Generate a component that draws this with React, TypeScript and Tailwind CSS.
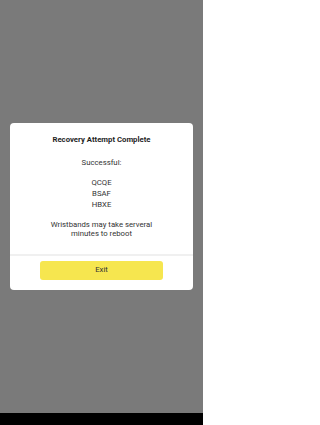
export default function App() {
  return (
    <div className="flex h-[425px] w-[203px] flex-col bg-black font-['Roboto','Liberation_Sans',sans-serif]">
      <div className="flex flex-1 items-center justify-center bg-[#7a7a7a] px-[10px]">
        <div className="w-full rounded-[4px] bg-white">
          <div className="px-[10px] pt-[11px] text-center">
            <h2 className="text-[7.75px] leading-[11px] font-bold text-[#1f1f1f]">
              Recovery Attempt Complete
            </h2>
            <p className="mt-[12px] text-[7.75px] leading-[11px] text-[#333]">Successful:</p>
            <div className="mt-[8.5px] text-[7.75px] leading-[11px] text-[#333]">
              <p>QCQE</p>
              <p>BSAF</p>
              <p>HBXE</p>
            </div>
            <p className="mx-auto mt-[10px] w-[112px] text-[7.75px] leading-[9.5px] text-[#333]">
              Wristbands may take serveral minutes to reboot
            </p>
          </div>
          <div className="mt-[15px] h-[2px] bg-[#f0f0f0]" />
          <div className="px-[30px] pt-[5px] pb-[10px]">
            <button
              type="button"
              className="flex h-[19px] w-full items-center justify-center rounded-[3px] bg-[#f6e64f] text-[7.75px] text-[#333]"
            >
              Exit
            </button>
          </div>
        </div>
      </div>
      <div className="h-[12px] bg-black" />
    </div>
  )
}
